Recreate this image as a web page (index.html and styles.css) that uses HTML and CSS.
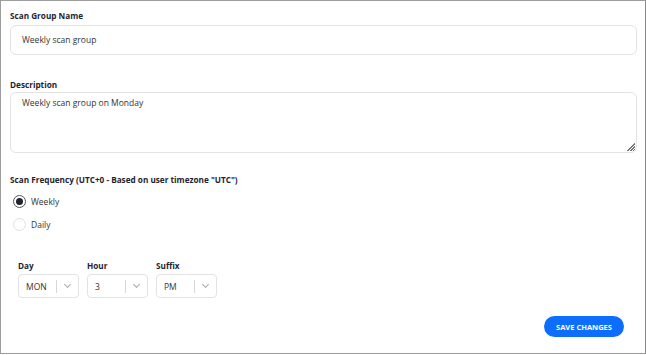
FILE: index.html
```html
<!DOCTYPE html>
<html lang="en">
  <head>
    <meta charset="UTF-8" />
    <title>Scan group</title>
    <link rel="stylesheet" href="styles.css">
  </head>
  <body>
    <div class="panel">
      <div class="field">
        <label class="label">Scan Group Name</label>
        <div class="input">Weekly scan group</div>
      </div>
      <div class="field">
        <label class="label">Description</label>
        <div class="textarea">
          Weekly scan group on Monday
          <span class="grip"></span>
        </div>
      </div>
      <div class="field freq">
        <label class="label">Scan Frequency (UTC+0 - Based on user timezone "UTC")</label>
        <div class="radio checked"><span class="dot"></span>Weekly</div>
        <div class="radio"><span class="dot"></span>Daily</div>
      </div>
      <div class="timeRow">
        <div class="pick">
          <div class="label">Day</div>
          <div class="select"><span class="val">MON</span><span class="sep"></span><span class="chev"></span></div>
        </div>
        <div class="pick">
          <div class="label">Hour</div>
          <div class="select"><span class="val">3</span><span class="sep"></span><span class="chev"></span></div>
        </div>
        <div class="pick">
          <div class="label">Suffix</div>
          <div class="select"><span class="val">PM</span><span class="sep"></span><span class="chev"></span></div>
        </div>
      </div>
      <div class="actions">
        <button class="saveBtn">SAVE CHANGES</button>
      </div>
    </div>
  </body>
</html>
```
FILE: styles.css
```css
* {
  margin: 0;
  padding: 0;
  box-sizing: border-box;
}
body {
  font-family: "Open Sans", "DejaVu Sans", sans-serif;
  color: #2b2b2b;
  background: #fff;
}
.panel {
  width: 646px;
  height: 354px;
  border: 1px solid #9d9d9d;
  border-right-color: #8a8a8a;
  padding: 9px 8px 0 9px;
}
.label {
  display: block;
  font-size: 8.2px;
  font-weight: 700;
  color: #1f2430;
  line-height: 12px;
}
.field {
  margin-bottom: 24px;
}
.input {
  margin-top: 3px;
  height: 30px;
  border: 1px solid #e3e3e3;
  border-radius: 6px;
  padding-left: 11px;
  font-size: 8.5px;
  line-height: 28px;
  color: #333;
}
.textarea {
  position: relative;
  margin-top: 1px;
  height: 61px;
  border: 1px solid #e3e3e3;
  border-radius: 6px;
  padding: 4px 11px;
  font-size: 8.5px;
  line-height: 12px;
  color: #333;
}
.grip {
  position: absolute;
  right: 1px;
  bottom: 1px;
  width: 9px;
  height: 9px;
  background: repeating-linear-gradient(135deg, transparent 0 1px, #777 1px 2px);
  clip-path: polygon(100% 0, 100% 100%, 0 100%);
}
.field:nth-child(2) {
  margin-bottom: 21px;
}
.freq {
  margin-bottom: 0;
}
.freq .label {
  margin-bottom: 9px;
}
.radio {
  display: flex;
  align-items: center;
  gap: 5px;
  height: 12px;
  margin-bottom: 11px;
  font-size: 8.5px;
  color: #333;
}
.dot {
  width: 13px;
  height: 13px;
  border: 1px solid #e0e0e0;
  border-radius: 50%;
  margin-left: 3px;
  display: flex;
  align-items: center;
  justify-content: center;
}
.radio.checked .dot {
  border: 1px solid #555;
}
.radio.checked .dot::after {
  content: "";
  width: 7px;
  height: 7px;
  border-radius: 50%;
  background: #1f2430;
}
.timeRow {
  display: flex;
  gap: 8px;
  padding-left: 8px;
  margin-top: 30px;
}
.pick .label {
  margin-bottom: 2px;
}
.select {
  width: 61px;
  height: 24px;
  border: 1px solid #e3e3e3;
  border-radius: 4px;
  display: flex;
  align-items: center;
  font-size: 8.5px;
  color: #333;
}
.val {
  width: 37px;
  padding-left: 7px;
}
.sep {
  width: 1px;
  height: 13px;
  background: #d6d6d6;
}
.chev {
  width: 5px;
  height: 5px;
  border-right: 1px solid #aaa;
  border-bottom: 1px solid #aaa;
  transform: rotate(45deg);
  margin: -3px 0 0 8px;
}
.actions {
  display: flex;
  justify-content: flex-end;
  padding-right: 13px;
  margin-top: 18px;
}
.saveBtn {
  width: 80px;
  height: 21px;
  border: none;
  border-radius: 11px;
  background: #0d6efd;
  color: #fff;
  font-family: inherit;
  font-size: 7.5px;
  font-weight: 700;
}
```
